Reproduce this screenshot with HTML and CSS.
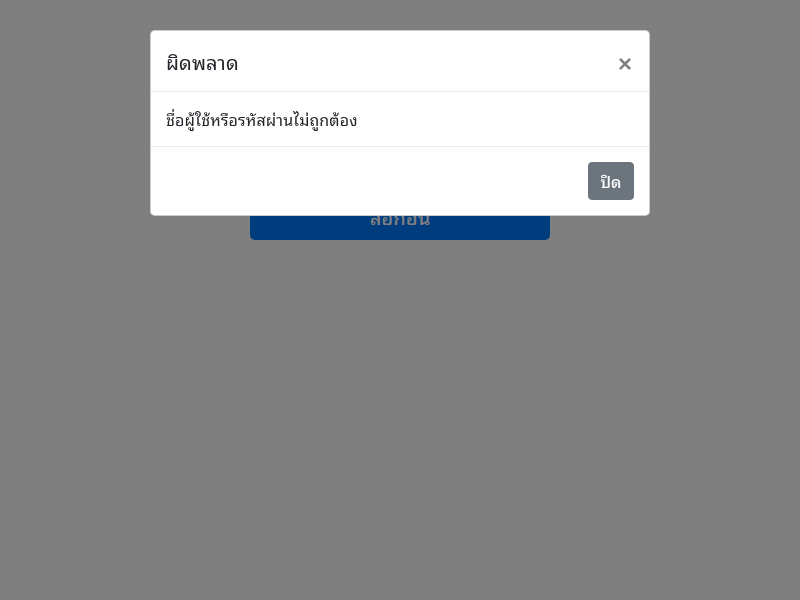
FILE: index.html
```html
<!DOCTYPE html>
<html lang="th">
<head>
<meta charset="utf-8">
<title>ล็อกอิน</title>
<link rel="stylesheet" href="styles.css">
</head>
<body>
<main class="page">
  <form class="login">
    <button type="button" class="btn-login">ล็อกอิน</button>
  </form>
</main>
<div class="backdrop"></div>
<div class="modal">
  <div class="dialog">
    <div class="modal-header">
      <h5 class="modal-title">ผิดพลาด</h5>
      <button type="button" class="close" aria-label="Close">&times;</button>
    </div>
    <div class="modal-body">ชื่อผู้ใช้หรือรหัสผ่านไม่ถูกต้อง</div>
    <div class="modal-footer">
      <button type="button" class="btn-secondary">ปิด</button>
    </div>
  </div>
</div>
</body>
</html>
```
FILE: styles.css
```css
* { box-sizing: border-box; }
html, body {
  margin: 0;
  height: 100%;
}
body {
  font-family: "Noto Sans Thai Looped", "Noto Sans", sans-serif;
  font-size: 16px;
  line-height: 1.5;
  color: #212529;
  background: #fff;
  overflow: hidden;
}
.page {
  display: flex;
  justify-content: center;
  padding-top: 192px;
}
.login {
  width: 300px;
}
.btn-login {
  display: block;
  width: 100%;
  height: 48px;
  border: 0;
  border-radius: 5px;
  background: #007bff;
  color: #fff;
  font-family: inherit;
  font-size: 20px;
  font-weight: 500;
}
.backdrop {
  position: fixed;
  inset: 0;
  background: rgba(0, 0, 0, 0.5);
}
.modal {
  position: fixed;
  inset: 0;
  display: flex;
  justify-content: center;
  align-items: flex-start;
  padding-top: 30px;
}
.dialog {
  width: 500px;
  background: #fff;
  border: 1px solid rgba(0, 0, 0, 0.2);
  border-radius: 4.8px;
}
.modal-header {
  display: flex;
  align-items: flex-start;
  justify-content: space-between;
  padding: 15px;
  border-bottom: 1px solid #e9ecef;
  height: 61px;
}
.modal-title {
  margin: 0;
  font-size: 20px;
  font-weight: 400;
  line-height: 30px;
  letter-spacing: 0.1px;
}
.close {
  padding: 21px 17px 15px 15px;
  margin: -15px -15px -15px auto;
  border: 0;
  background: transparent;
  font-family: "Liberation Sans", Arial, sans-serif;
  font-size: 24px;
  font-weight: 700;
  line-height: 1;
  color: #000;
  opacity: 0.5;
  text-shadow: 0 1px 0 #fff;
}
.modal-body {
  padding: 15px;
  line-height: 24px;
  letter-spacing: 0.15px;
}
.modal-footer {
  display: flex;
  justify-content: flex-end;
  padding: 15px;
  border-top: 1px solid #e9ecef;
}
.btn-secondary {
  width: 46px;
  height: 38px;
  padding: 6px 0;
  border: 1px solid #6c757d;
  border-radius: 4px;
  background: #6c757d;
  color: #fff;
  font-family: inherit;
  font-size: 16px;
  font-weight: 500;
  line-height: 24px;
  text-align: center;
}
```
